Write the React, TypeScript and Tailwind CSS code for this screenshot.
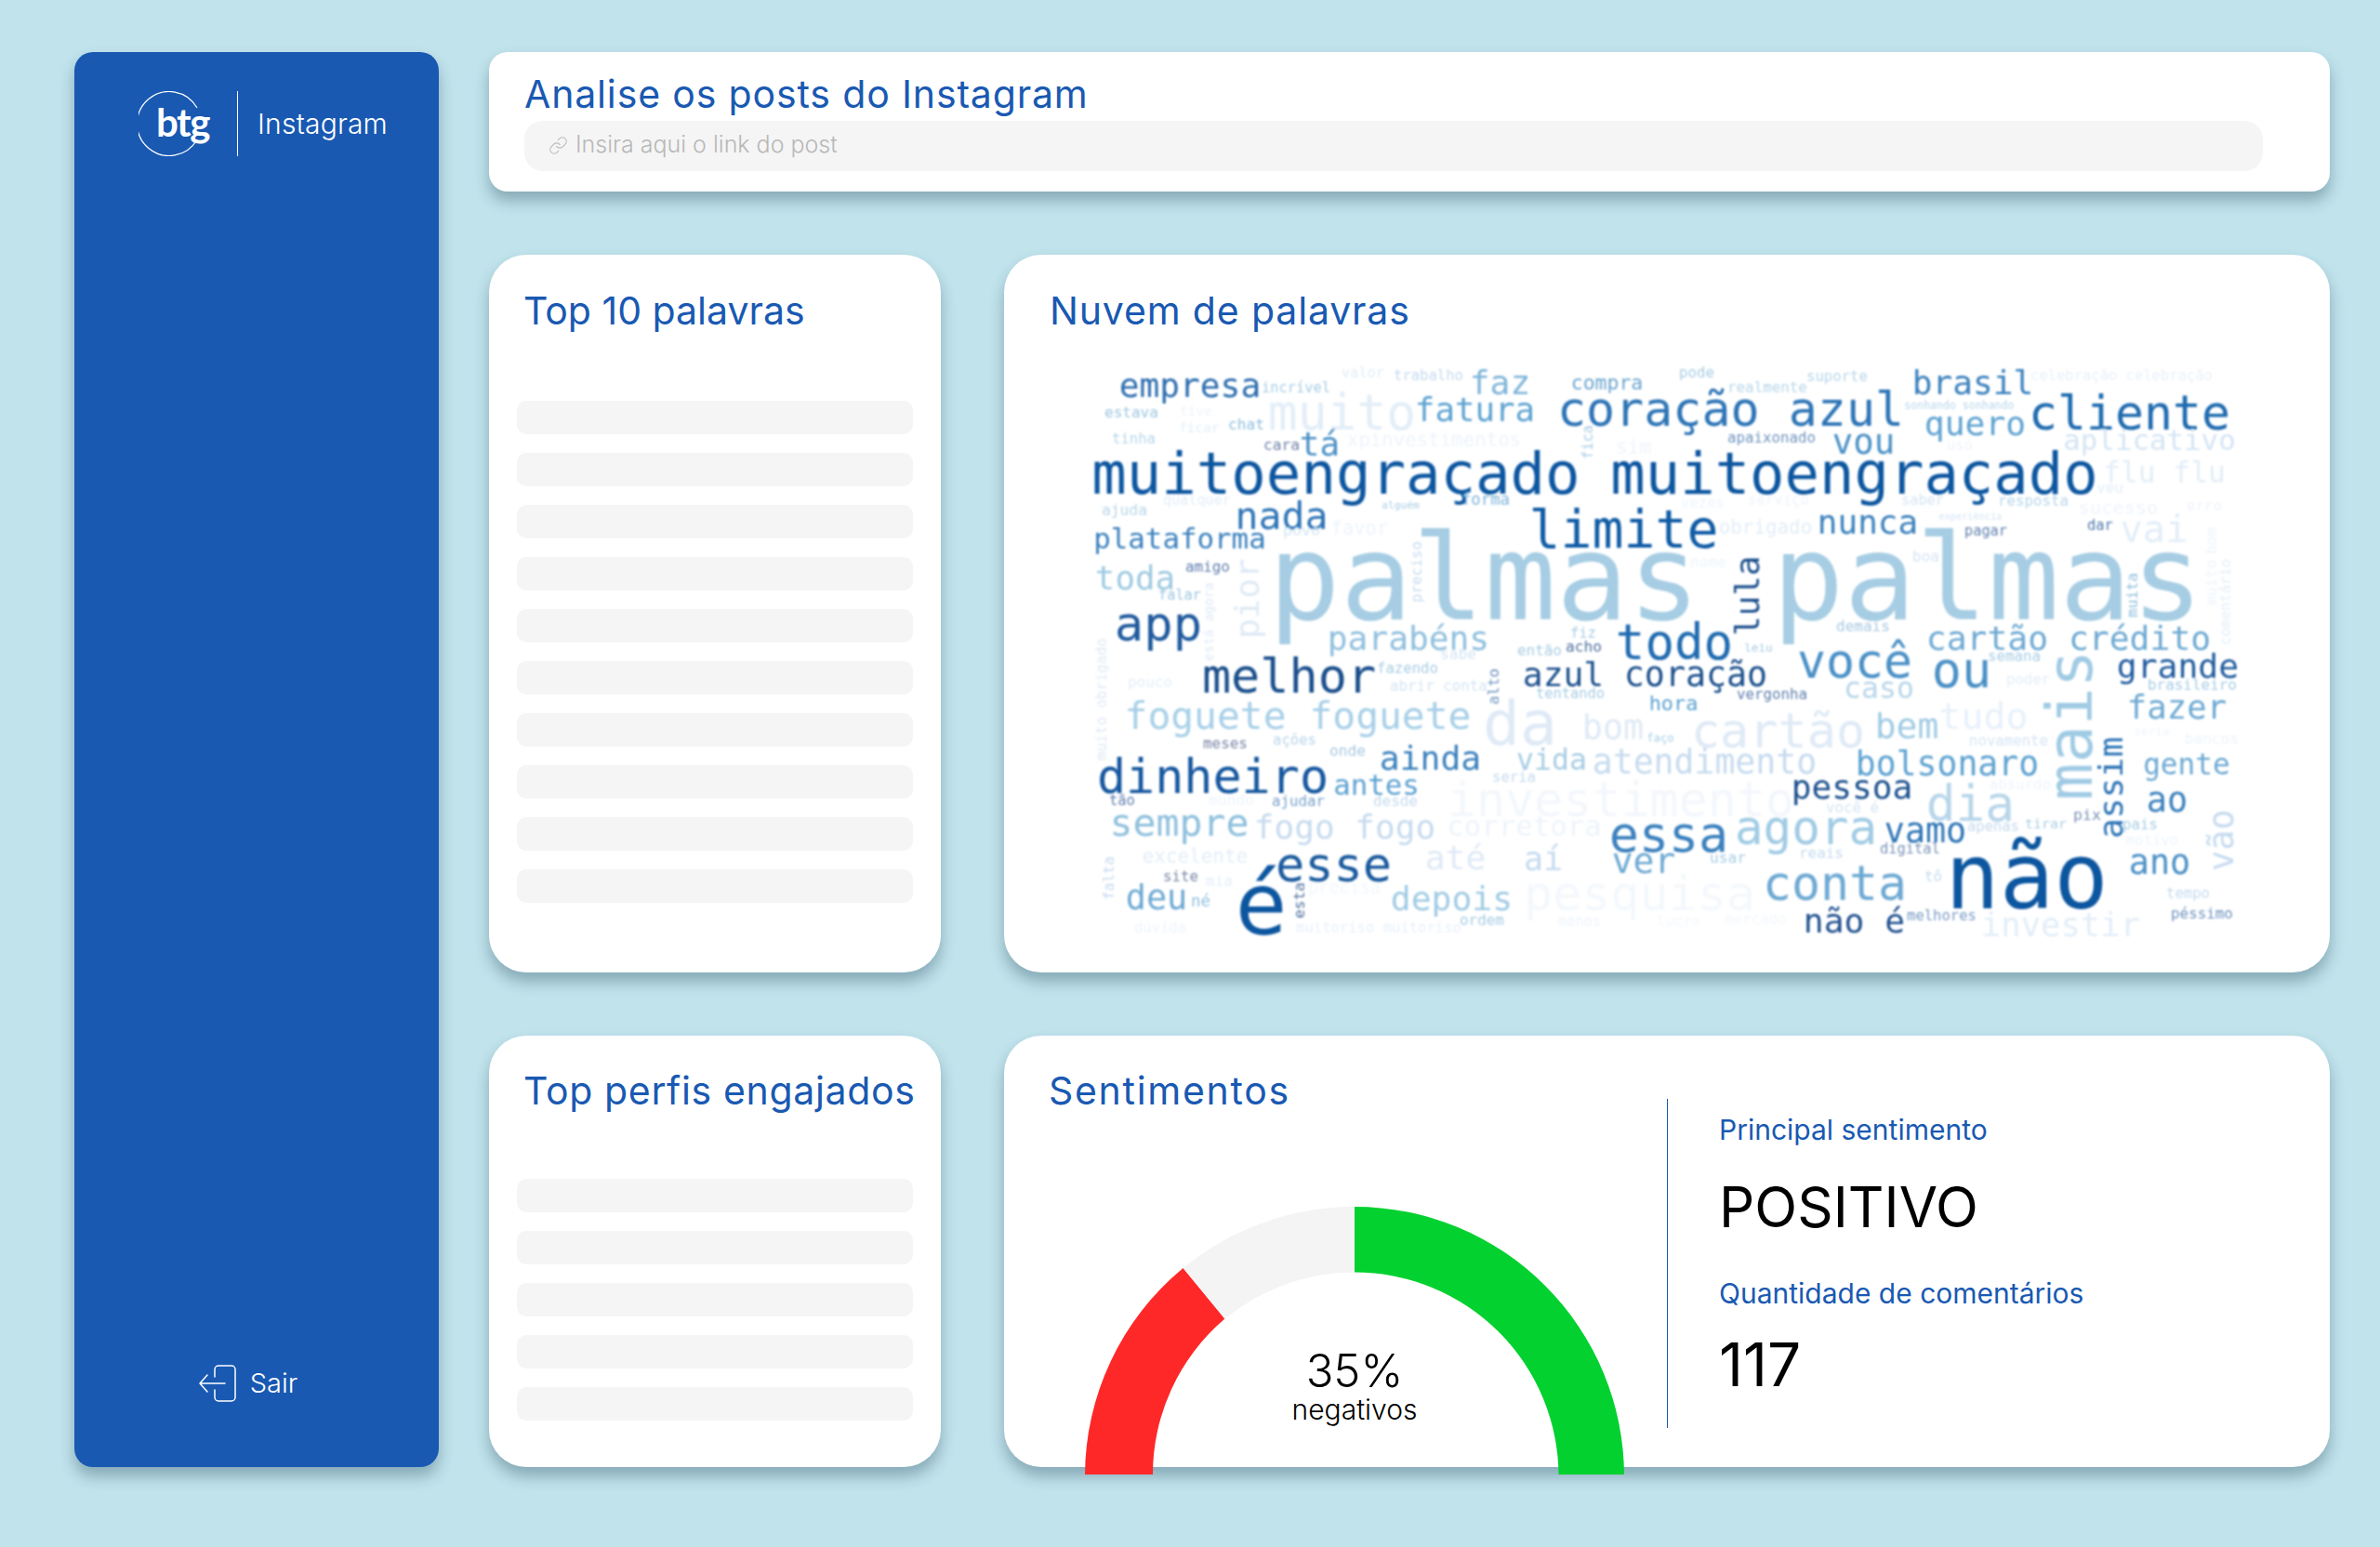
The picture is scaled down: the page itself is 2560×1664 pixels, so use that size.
import { Link } from "lucide-react";

type W = [string, number, number, number, string];
type V = [string, number, number, number, number, string];

const OX = 1170;
const OY = 392;

const words: W[] = [
  ["empresa", 1206, 1354, 426, "#2a6cae"], ["incrível", 1358, 1430, 421, "#a8cde4"], ["valor", 1444, 1488, 405, "#e1edf7"],
  ["trabalho", 1500, 1573, 408, "#c6dbef"], ["faz", 1583, 1644, 423, "#7fb5d9"], ["compra", 1691, 1766, 417, "#6da5cf"],
  ["muito", 1367, 1520, 461, "#e3eef8"], ["fatura", 1524, 1649, 451, "#5da2d1"], ["coração azul", 1678, 2045, 457, "#2d74b6"],
  ["estava", 1189, 1245, 448, "#9ec6e0"], ["tive", 1270, 1303, 445, "#eef4fb"], ["ficar", 1269, 1311, 463, "#e3eef8"],
  ["chat", 1322, 1359, 461, "#8fbfde"], ["tinha", 1197, 1242, 476, "#b8d6ea"], ["cara", 1360, 1397, 483, "#6e7fa8"],
  ["tá", 1400, 1439, 488, "#4a90c6"], ["xpinvestimentos", 1450, 1635, 479, "#eef4fb"], ["sim", 1739, 1775, 486, "#eef4fb"],
  ["muitoengraçado", 1178, 1696, 530, "#0c56a0"], ["muitoengraçado", 1736, 2253, 530, "#0c56a0"],
  ["qualquer", 1252, 1323, 542, "#e3eef8"], ["ajuda", 1186, 1233, 553, "#b8d6ea"], ["nada", 1331, 1426, 567, "#2d74b6"],
  ["alguém", 1487, 1526, 545, "#a8cde4"], ["forma", 1573, 1623, 542, "#7fb5d9"], ["limite", 1648, 1845, 588, "#0f5ba5"],
  ["plataforma", 1178, 1360, 588, "#3a80bd"], ["povo", 1381, 1419, 575, "#d5e5f4"], ["favor", 1433, 1492, 573, "#eef4fb"],
  ["palmas", 1372, 1821, 665, "#a6cde3"], ["palmas", 1914, 2362, 665, "#a6cde3"], ["toda", 1180, 1262, 632, "#9ecae1"],
  ["amigo", 1276, 1322, 613, "#5e7fae"], ["falar", 1247, 1291, 644, "#9ec6e0"], ["app", 1202, 1290, 687, "#1f5a9e"],
  ["parabéns", 1430, 1600, 698, "#8fbfde"], ["fiz", 1690, 1716, 685, "#a8cde4"], ["acho", 1685, 1722, 700, "#4f6f9f"],
  ["então", 1633, 1679, 703, "#a8cde4"], ["sabe", 1550, 1587, 708, "#d5e5f4"], ["todo", 1741, 1861, 707, "#1f6bb0"],
  ["pode", 1807, 1843, 404, "#a8cde4"], ["suporte", 1944, 2008, 408, "#b8d6ea"], ["realmente", 1859, 1943, 420, "#b8d6ea"],
  ["brasil", 2059, 2185, 423, "#3a80bd"], ["celebração celebração", 2185, 2379, 408, "#e8f1fa"], ["sonhando sonhando", 2049, 2166, 439, "#b8d6ea"],
  ["cliente", 2185, 2396, 461, "#1f6bb0"], ["quero", 2072, 2177, 467, "#5da2d1"], ["apaixonado", 1859, 1952, 474, "#6f94c0"],
  ["vou", 1973, 2036, 487, "#4a90c6"], ["aplicativo", 2221, 2403, 482, "#d5e5f4"], ["uso", 2095, 2121, 483, "#eef4fb"],
  ["flu flu", 2264, 2392, 517, "#e3eef8"], ["veu", 2256, 2283, 529, "#e3eef8"], ["vezes", 1809, 1854, 545, "#eef4fb"],
  ["serviço", 1881, 1945, 541, "#eef4fb"], ["saber", 2046, 2090, 542, "#d5e5f4"], ["resposta", 2150, 2224, 542, "#b8d6ea"],
  ["sucesso", 2237, 2320, 551, "#eef4fb"], ["erro", 2353, 2389, 547, "#eef4fb"], ["experiência", 2086, 2153, 557, "#d5e5f4"],
  ["obrigado", 1850, 1948, 573, "#e3eef8"], ["nunca", 1957, 2061, 572, "#3a80bd"], ["pagar", 2114, 2158, 575, "#5e7fae"],
  ["dar", 2246, 2272, 569, "#4f78ad"], ["vai", 2283, 2351, 582, "#e3eef8"], ["boa", 2058, 2085, 603, "#d5e5f4"],
  ["nome", 1819, 1856, 609, "#eef4fb"], ["demais", 1976, 2032, 678, "#a8c9e2"], ["cartão crédito", 2074, 2376, 698, "#6da9d3"],
  ["você", 1936, 2054, 728, "#4a90c6"], ["leiu", 1877, 1906, 700, "#a8cde4"],
  ["ou", 2081, 2139, 737, "#4a90c6"], ["semana", 2139, 2194, 709, "#a8cde4"], ["grande", 2279, 2406, 728, "#1f5a9e"],
  ["brasileiro", 2311, 2405, 740, "#a8cde4"], ["poder", 2159, 2204, 735, "#e3eef8"], ["coração", 1749, 1899, 737, "#1a4f8c"],
  ["azul", 1640, 1723, 737, "#1a4f8c"], ["caso", 1985, 2057, 750, "#b8d6ea"], ["vergonha", 1869, 1943, 750, "#5e7fae"],
  ["hora", 1775, 1825, 762, "#5da2d1"], ["fazer", 2290, 2393, 771, "#6da9d3"], ["tudo", 2088, 2179, 783, "#e8f1fa"],
  ["cartão", 1822, 2003, 803, "#dfeaf6"], ["bem", 2019, 2083, 793, "#a0cbe4"], ["novamente", 2119, 2202, 800, "#d5e5f4"],
  ["seria", 2296, 2333, 790, "#eef4fb"], ["bancos", 2351, 2407, 799, "#eef4fb"], ["atendimento", 1715, 1952, 831, "#c6dbef"],
  ["vida", 1633, 1705, 827, "#a8cde4"], ["bolsonaro", 1998, 2191, 833, "#5da2d1"], ["gente", 2307, 2397, 831, "#6da9d3"],
  ["pessoa", 1929, 2055, 858, "#1a4f8c"], ["absurdo", 2141, 2205, 847, "#eef4fb"], ["você é", 1965, 2020, 872, "#d5e5f4"],
  ["investimento", 1560, 1927, 877, "#f3f7fc"], ["dia", 2075, 2164, 882, "#b8d6ea"], ["ao", 2311, 2351, 872, "#3a80bd"],
  ["pix", 2231, 2259, 881, "#7b93b8"], ["tirar", 2179, 2222, 890, "#a8cde4"], ["apenas", 2117, 2171, 893, "#c6dbef"],
  ["pais", 2284, 2320, 890, "#a8cde4"], ["agora", 1869, 2016, 907, "#a0cbe4"], ["vamo", 2029, 2113, 905, "#2d74b6"],
  ["essa", 1734, 1856, 915, "#3a80bd"], ["digital", 2023, 2086, 917, "#7b93b8"], ["reais", 1936, 1982, 921, "#c6dbef"],
  ["motivo", 2288, 2342, 908, "#eef4fb"], ["usar", 1840, 1877, 927, "#a8cde4"], ["ver", 1736, 1800, 938, "#6da9d3"],
  ["não", 2098, 2262, 975, "#0c56a0"], ["ano", 2292, 2354, 939, "#4a90c6"], ["conta", 1899, 2048, 967, "#6da9d3"],
  ["tô", 2071, 2088, 946, "#c6dbef"], ["tempo", 2331, 2376, 965, "#c6dbef"], ["péssimo", 2336, 2401, 986, "#6f94c0"],
  ["não é", 1942, 2047, 1002, "#1f4f8e"], ["melhores", 2052, 2125, 989, "#7b9cc6"], ["investir", 2133, 2300, 1005, "#e3eef8"],
  ["pesquisa", 1642, 1885, 978, "#f4f8fc"], ["lucro", 1783, 1828, 995, "#f3f7fc"], ["mercado", 1856, 1921, 992, "#f3f7fc"],
  ["melhor", 1296, 1477, 744, "#1a4f8c"], ["fazendo", 1482, 1546, 722, "#a8cde4"], ["pouco", 1214, 1260, 737, "#e3eef8"],
  ["abrir conta", 1496, 1599, 741, "#d5e5f4"], ["tentando", 1653, 1725, 750, "#a8cde4"], ["foguete foguete", 1212, 1580, 783, "#a8d0e8"],
  ["da", 1599, 1671, 799, "#dfeaf6"], ["bom", 1704, 1766, 794, "#dfeaf6"], ["faço", 1772, 1800, 796, "#a8cde4"],
  ["meses", 1295, 1341, 803, "#7b87a8"], ["ações", 1370, 1415, 800, "#b8d6ea"], ["onde", 1431, 1468, 812, "#a8c9e2"],
  ["ainda", 1486, 1591, 827, "#3a80bd"], ["dinheiro", 1183, 1426, 852, "#15579f"], ["antes", 1436, 1525, 853, "#5da2d1"],
  ["seria", 1606, 1651, 840, "#c6dbef"], ["tão", 1194, 1220, 865, "#5e7fae"], ["mundo", 1301, 1348, 865, "#eef4fb"],
  ["ajudar", 1369, 1424, 865, "#7ba3cc"], ["desde", 1478, 1524, 865, "#c6dbef"], ["sempre", 1196, 1341, 897, "#8fc0dd"],
  ["fogo fogo", 1351, 1542, 900, "#c6dbef"], ["corretora", 1558, 1721, 897, "#eef4fb"], ["excelente", 1230, 1341, 927, "#e3eef8"],
  ["esse", 1375, 1494, 946, "#1a5a9e"], ["até", 1535, 1596, 934, "#dfeaf6"], ["aí", 1641, 1679, 934, "#c6dbef"],
  ["site", 1252, 1288, 946, "#7b87a8"], ["mia", 1298, 1325, 952, "#e3eef8"], ["deu", 1213, 1275, 977, "#6da9d3"],
  ["né", 1282, 1301, 974, "#8fbfde"], ["é", 1334, 1379, 1003, "#0c56a0"], ["depois", 1498, 1625, 978, "#a0cbe4"],
  ["ordem", 1571, 1617, 993, "#a8cde4"], ["dúvida", 1221, 1275, 1002, "#eef4fb"], ["muitoriso muitoriso", 1395, 1571, 1002, "#e8f1fa"],
  ["menos", 1677, 1721, 995, "#eef4fb"], ["precisa", 1408, 1484, 960, "#f3f7fc"],
];

const vertical: V[] = [
  ["fica", 1700, 1714, 458, 493, "#a8cde4"], ["pior", 1336, 1354, 603, 685, "#dfeaf6"], ["preciso", 1517, 1529, 583, 647, "#c6dbef"],
  ["lula", 1862, 1892, 600, 682, "#1a4f8c"], ["está agora", 1296, 1305, 627, 710, "#dfeaf6"], ["muito obrigado", 1180, 1190, 687, 817, "#dfeaf6"],
  ["muita", 2290, 2299, 617, 663, "#8fbfde"], ["comentário", 2391, 2400, 602, 693, "#e3eef8"], ["muito", 2376, 2385, 603, 650, "#eef4fb"],
  ["bom", 2378, 2385, 568, 595, "#eef4fb"], ["mais", 2212, 2251, 703, 857, "#a0cbe4"], ["assim", 2264, 2284, 795, 900, "#2d74b6"],
  ["vão", 2383, 2403, 873, 935, "#c6dbef"], ["alto", 1604, 1613, 720, 757, "#6f94c0"], ["falta", 1187, 1199, 922, 967, "#c6dbef"],
  ["esta", 1392, 1404, 950, 987, "#4f6f9f"],
];

function size(text: string, len: number) {
  return len / (0.602 * text.length - 0.12);
}

function WordCloud() {
  return (
    <div className="relative ml-[41px] mt-[33px] h-[630px] w-[1260px] whitespace-pre font-['DejaVu_Sans_Mono',monospace] leading-none blur-[1.3px]">
      {words.map(([t, x1, x2, b, c], i) => {
        const fs = size(t, x2 - x1);
        return (
          <span
            key={i}
            className="absolute"
            style={{ left: x1 - 0.06 * fs - OX, top: b + 2 - 0.846 * fs - OY, fontSize: fs, color: c }}
          >
            {t}
          </span>
        );
      })}
      {vertical.map(([t, x1, x2, y1, y2, c], i) => {
        const fs = size(t, y2 - y1);
        return (
          <span
            key={i}
            className="absolute origin-top-left -rotate-90"
            style={{ left: x2 - 0.846 * fs - OX, top: y2 + 0.06 * fs - OY, fontSize: fs, color: c }}
          >
            {t}
          </span>
        );
      })}
    </div>
  );
}

const cardCls = "rounded-[40px] bg-white shadow-[0_10px_16px_rgba(0,40,60,0.3)]";
const titleCls = "text-[41px] leading-[49px] font-normal text-[#1959b2]";

function Skeleton({ n }: { n: number }) {
  return (
    <div className="flex flex-col gap-5">
      {Array.from({ length: n }).map((_, i) => (
        <div key={i} className="h-9 rounded-[10px] bg-[#f5f5f5]" />
      ))}
    </div>
  );
}

function Gauge() {
  return (
    <div className="relative ml-[39px] mt-[100px] h-[288px] w-[580px]">
      <svg width="580" height="288" viewBox="0 0 580 288" className="block">
        <path d="M0 290A290 290 0 0 1 105.6 66.1L150.4 120.6A219.5 219.5 0 0 0 73 290Z" fill="#ff2828" />
        <path d="M105.6 66.1A290 290 0 0 1 290 0V70.5A219.5 219.5 0 0 0 150.4 120.6Z" fill="#f4f4f4" />
        <path d="M290 0A290 290 0 0 1 580 290H509.5A219.5 219.5 0 0 0 290 70.5Z" fill="#02d12f" />
      </svg>
      <div className="absolute left-0 right-0 top-[147px] flex flex-col items-center text-black">
        <div className="text-[49px] font-light leading-[60px]">35%</div>
        <div className="mt-[-7px] text-[30px] font-light leading-[36px]">negativos</div>
      </div>
    </div>
  );
}

export default function App() {
  return (
    <div className="flex min-h-screen w-full gap-[54px] bg-[#c0e3ec] pl-[80px] pt-[56px] font-['Inter',sans-serif]">
      <aside className="flex h-[1522px] w-[392px] flex-col items-center justify-between rounded-[20px] bg-[#1959b2] pb-[70px] pt-[42px] text-white shadow-[0_10px_16px_rgba(0,40,60,0.3)]">
        <div className="ml-[14px] flex items-center">
          <div className="relative h-[70px] w-[80px]">
            <svg width="80" height="70" viewBox="0 0 80 70" className="absolute left-0 top-0">
              <path d="M63 18A34.5 34.5 0 1 0 63 52" fill="none" stroke="white" strokeWidth="1.2" />
            </svg>
            <span className="absolute left-[19px] top-[8px] text-[42px] font-bold leading-[50px] tracking-[-1.5px] font-['Lato',sans-serif]">btg</span>
          </div>
          <div className="ml-[26px] h-[70px] w-px bg-white" />
          <span className="ml-[21px] text-[30px] font-light leading-[36px] tracking-[0.2px]">Instagram</span>
        </div>
        <div className="mr-[18px] flex items-center gap-[15px]">
          <svg width="40" height="40" viewBox="0 0 40 40" fill="none" stroke="white" strokeWidth="1.5" strokeLinecap="round" strokeLinejoin="round">
            <path d="M17 13V5a4 4 0 0 1 4-4h14a4 4 0 0 1 4 4v30a4 4 0 0 1-4 4H21a4 4 0 0 1-4-4v-8" />
            <path d="M28 20H2M9 11L1 20l8 9" />
          </svg>
          <span className="text-[29px] font-light leading-[36px]">Sair</span>
        </div>
      </aside>

      <main className="flex w-[1980px] flex-col gap-[68px]">
        <section className="h-[150px] rounded-[20px] bg-white px-[38px] pt-[21px] shadow-[0_10px_16px_rgba(0,40,60,0.3)]">
          <h1 className={`${titleCls} tracking-[0.85px]`}>Analise os posts do Instagram</h1>
          <div className="mt-[4px] flex h-[54px] w-[1870px] items-center gap-[8px] rounded-[20px] bg-[#f5f5f5] pb-[2px] pl-[26px]">
            <Link size={21} strokeWidth={1.3} className="text-[#bcbcbc]" />
            <span className="text-[25px] font-light text-[#b8b8b8]">Insira aqui o link do post</span>
          </div>
        </section>

        <div className="flex h-[772px] gap-[68px]">
          <section className={`${cardCls} w-[486px] px-[30px] pt-[36px]`}>
            <h2 className={`${titleCls} pl-[7px]`}>Top 10 palavras</h2>
            <div className="mt-[72px]">
              <Skeleton n={10} />
            </div>
          </section>
          <section className={`${cardCls} w-[1426px] pl-[49px] pt-[36px]`}>
            <h2 className={`${titleCls} tracking-[0.85px]`}>Nuvem de palavras</h2>
            <WordCloud />
          </section>
        </div>

        <div className="flex h-[464px] gap-[68px]">
          <section className={`${cardCls} w-[486px] px-[30px] pt-[35px]`}>
            <h2 className={`${titleCls} pl-[7px] whitespace-nowrap tracking-[0.65px]`}>Top perfis engajados</h2>
            <div className="mt-[70px]">
              <Skeleton n={5} />
            </div>
          </section>
          <section className={`${cardCls} flex w-[1426px]`}>
            <div className="w-[713px] pl-[48px] pt-[35px]">
              <h2 className={`${titleCls} tracking-[1.7px]`}>Sentimentos</h2>
              <Gauge />
            </div>
            <div className="mt-[68px] h-[354px] border-l border-[#1959b2] pl-[55px]">
              <div className="mt-[15px] text-[30px] leading-[36px] text-[#1959b2]">Principal sentimento</div>
              <div className="mt-[30px] text-[60px] leading-[70px] text-black">POSITIVO</div>
              <div className="mt-[40px] text-[30px] leading-[36px] text-[#1959b2]">Quantidade de comentários</div>
              <div className="mt-[24px] text-[64px] leading-[70px] text-black">117</div>
            </div>
          </section>
        </div>
      </main>
    </div>
  );
}
